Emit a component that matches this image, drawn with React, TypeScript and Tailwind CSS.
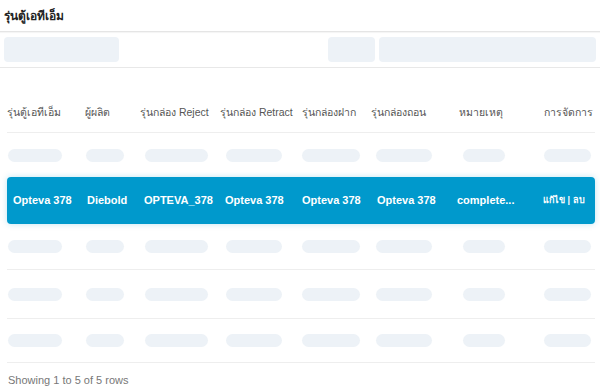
import React from 'react';

const cols = [
  { label: 'รุ่นตู้เอทีเอ็ม', w: 'w-[78px]', pill: 'w-[54px]', pl: 'pl-[1px]', tx: 'pl-[6px]' },
  { label: 'ผู้ผลิต', w: 'w-[55px]', pill: 'w-[38px]', pl: 'pl-[1px]', tx: 'pl-[2px]' },
  { label: 'รุ่นกล่อง Reject', w: 'w-[80px]', pill: 'w-[63px]', pl: 'pl-[5px]', tx: 'pl-[4px]' },
  { label: 'รุ่นกล่อง Retract', w: 'w-[82px]', pill: 'w-[56px]', pl: 'pl-[6px]', tx: 'pl-[5px]' },
  { label: 'รุ่นกล่องฝาก', w: 'w-[69px]', pill: 'w-[58px]', pl: 'pl-0', tx: 'pl-0' },
  { label: 'รุ่นกล่องถอน', w: 'w-[88px]', pill: 'w-[56px]', pl: 'pl-[5px]', tx: 'pl-[6px]' },
  { label: 'หมายเหตุ', w: 'w-[85px]', pill: 'w-[42px]', pl: 'pl-[4px]', tx: '-ml-[2px]' },
  { label: 'การจัดการ', w: 'flex-1', pill: 'w-[47px]', pl: 'pl-0', tx: '-ml-[1px]' },
];

const selected = ['Opteva 378', 'Diebold', 'OPTEVA_378', 'Opteva 378', 'Opteva 378', 'Opteva 378', 'complete...'];

const SkeletonRow = ({ h, border = true }: { h: string; border?: boolean }) => (
  <div className={`flex items-center ${h} ${border ? 'border-b border-[#eeeeee]' : ''}`}>
    {cols.map((c, i) => (
      <div key={i} className={`${c.w} ${c.pl}`}>
        <div className={`${c.pill} h-[13px] rounded-full bg-[#edf2f7]`} />
      </div>
    ))}
  </div>
);

export default function App() {
  return (
    <div className="w-[600px] h-[387px] bg-white overflow-hidden font-['Liberation_Sans','Noto_Sans',sans-serif]">
      <div className="h-[32px] flex items-center px-[4px] border-b border-[#e5e5e5] shadow-[0_1px_1px_rgba(0,0,0,0.04)]">
        <span className="text-[12px] font-bold text-[#222]">รุ่นตู้เอทีเอ็ม</span>
      </div>
      <div className="h-[36px] flex items-center gap-[4px] px-[4px] border-b border-[#e8e8e8]">
        <div className="w-[115px] h-[25px] rounded-[4px] bg-[#edf2f7]" />
        <div className="flex-1" />
        <div className="w-[47px] h-[25px] rounded-[4px] bg-[#edf2f7]" />
        <div className="w-[217px] h-[25px] rounded-[4px] bg-[#edf2f7]" />
      </div>
      <div className="mx-[7px] mr-[5px]">
        <div className="flex items-center h-[65px] pt-[26px] border-b border-[#eeeeee] text-[10.5px] text-[#555]">
          {cols.map((c, i) => (
            <div key={i} className={`${c.w} whitespace-nowrap`}>
              {c.label}
            </div>
          ))}
        </div>
        <SkeletonRow h="h-[44px]" border={false} />
        <div className="flex items-center h-[47px] rounded-[4px] bg-[#0099cc] shadow-[0_0_6px_rgba(0,153,204,0.25)] text-white text-[11px] font-bold">
          {selected.map((s, i) => (
            <div key={i} className={`${cols[i].w} whitespace-nowrap`}>
              <div className={cols[i].tx}>{s}</div>
            </div>
          ))}
          <div className="flex-1 text-[9px] whitespace-nowrap">
            <div className={cols[7].tx}>แก้ไข | ลบ</div>
          </div>
        </div>
        <SkeletonRow h="h-[46px]" />
        <SkeletonRow h="h-[49px]" />
        <SkeletonRow h="h-[44px]" />
      </div>
      <div className="px-[8px] pt-[9px] text-[11px] text-[#777]">Showing 1 to 5 of 5 rows</div>
    </div>
  );
}
